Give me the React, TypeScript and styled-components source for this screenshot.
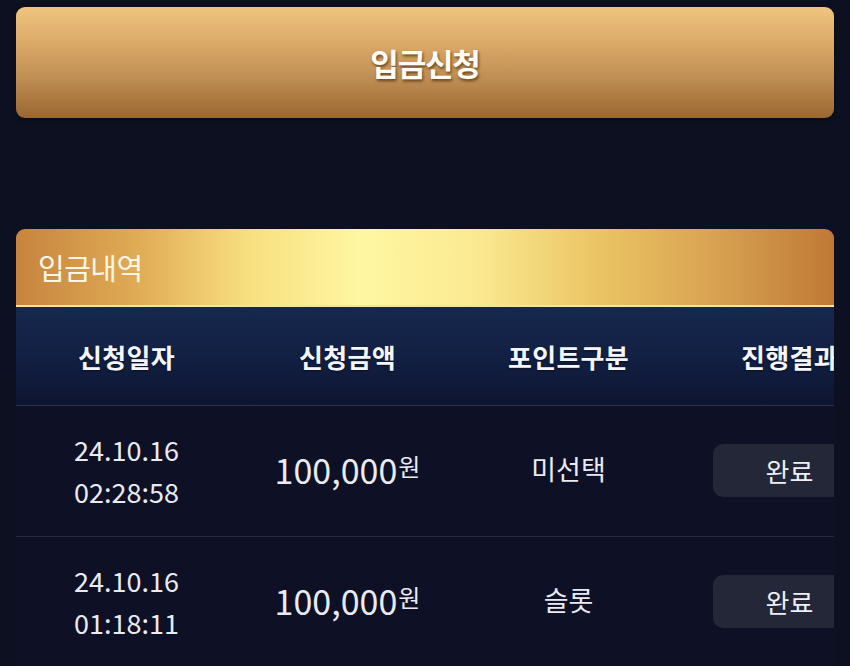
import React from "react";
import styled, { createGlobalStyle } from "styled-components";

interface Deposit {
  date: string;
  time: string;
  amount: string;
  point: string;
  status: string;
}

const deposits: Deposit[] = [
  { date: "24.10.16", time: "02:28:58", amount: "100,000", point: "미선택", status: "완료" },
  { date: "24.10.16", time: "01:18:11", amount: "100,000", point: "슬롯", status: "완료" },
];

const columns = ["신청일자", "신청금액", "포인트구분", "진행결과"];

const App: React.FC = () => {
  return (
    <>
      <GlobalStyle />
      <Page>
        <ApplyButton>입금신청</ApplyButton>
        <HistoryPanel>
          <PanelTitle>입금내역</PanelTitle>
          <TableWrap>
            <Table>
              <HeadRow>
                {columns.map((col) => (
                  <HeadCell key={col}>{col}</HeadCell>
                ))}
              </HeadRow>
              {deposits.map((d, i) => (
                <Row key={i}>
                  <Cell>
                    <DateText>
                      {d.date}
                      <br />
                      {d.time}
                    </DateText>
                  </Cell>
                  <Cell>
                    <Amount>
                      {d.amount}
                      <Won>원</Won>
                    </Amount>
                  </Cell>
                  <Cell>
                    <PointText>{d.point}</PointText>
                  </Cell>
                  <Cell>
                    <StatusBadge>{d.status}</StatusBadge>
                  </Cell>
                </Row>
              ))}
            </Table>
          </TableWrap>
        </HistoryPanel>
      </Page>
    </>
  );
};

const GlobalStyle = createGlobalStyle`
  html, body {
    margin: 0;
    padding: 0;
    background: #0d1020;
    font-family: "Noto Sans CJK KR", "Noto Sans", sans-serif;
    color: #eceef4;
    overflow: hidden;
  }
`;

const Page = styled.div`
  width: 850px;
  height: 666px;
  padding: 7px 16px 0;
  box-sizing: border-box;
  display: flex;
  flex-direction: column;
  gap: 111px;
`;

const ApplyButton = styled.button`
  height: 111px;
  width: 100%;
  border: none;
  border-radius: 9px;
  background: linear-gradient(180deg, #f0c47f 0%, #d9a867 35%, #be8d52 65%, #9a6731 100%);
  color: #fffdf6;
  font-family: inherit;
  font-size: 31px;
  font-weight: 700;
  letter-spacing: -1.2px;
  text-shadow: 1px 2px 3px rgba(70, 40, 10, 0.75);
  box-shadow: 0 2px 6px rgba(0, 0, 0, 0.35);
  cursor: pointer;
`;

const HistoryPanel = styled.section`
  border-radius: 9px 9px 0 0;
  overflow: hidden;
  background: #0e1126;
  flex: 1;
`;

const PanelTitle = styled.h3`
  margin: 0;
  height: 76px;
  padding-left: 22px;
  display: flex;
  align-items: center;
  font-size: 29px;
  font-weight: 400;
  letter-spacing: -0.5px;
  color: #fbf6e6;
  background: linear-gradient(
    90deg,
    #c7843e 0%,
    #e0ac55 15%,
    #f7de7e 28%,
    #fff7a2 42%,
    #fbea92 56%,
    #eac262 72%,
    #d9a353 85%,
    #bf7935 100%
  );
  border-bottom: 2px solid #f6e3a2;
`;

const TableWrap = styled.div`
  overflow: hidden;
`;

const Table = styled.div`
  width: 884px;
`;

const HeadRow = styled.div`
  display: grid;
  grid-template-columns: repeat(4, 221px);
  height: 98px;
  align-items: center;
  background: linear-gradient(180deg, #16284d 0%, #122043 50%, #0e1531 100%);
  border-bottom: 1px solid #2e3348;
`;

const HeadCell = styled.div`
  text-align: center;
  font-size: 26px;
  font-weight: 700;
  letter-spacing: 0.3px;
  color: #f4f6fb;
  text-shadow: 0 1px 2px rgba(0, 0, 0, 0.5);
`;

const Row = styled.div`
  display: grid;
  grid-template-columns: repeat(4, 221px);
  height: 130px;
  align-items: center;
  border-bottom: 1px solid #262b3e;
`;

const Cell = styled.div`
  display: flex;
  justify-content: center;
  align-items: center;
`;

const DateText = styled.div`
  font-size: 27px;
  line-height: 42px;
  text-align: center;
  color: #e9ebf1;
`;

const Amount = styled.div`
  font-size: 34px;
  color: #e9ebf1;
  margin-bottom: 4px;
`;

const Won = styled.span`
  font-size: 24px;
  vertical-align: 8px;
  margin-left: 1px;
`;

const PointText = styled.div`
  font-size: 27px;
  color: #e9ebf1;
  margin-bottom: 5px;
`;

const StatusBadge = styled.div`
  width: 154px;
  height: 53px;
  margin-bottom: 2px;
  border-radius: 10px;
  background: #232738;
  display: flex;
  align-items: center;
  justify-content: center;
  font-size: 26px;
  color: #eef0f5;
`;

export default App;
